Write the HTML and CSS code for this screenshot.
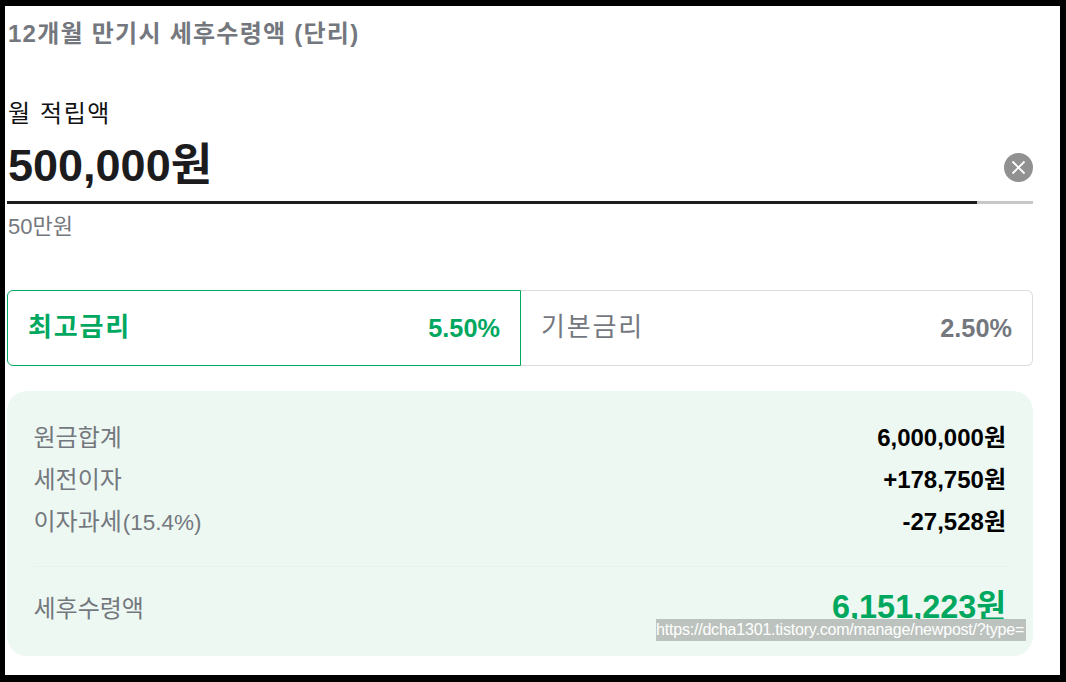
FILE: index.html
```html
<!DOCTYPE html>
<html lang="ko">
<head>
  <meta charset="UTF-8">
  <title>세후수령액</title>
  <link rel="stylesheet" href="styles.css">
</head>
<body>
  <div class="frame">
    <div class="calc">
      <h2 class="calc-title">12개월 만기시 세후수령액 (단리)</h2>

      <div class="amount-label">월 적립액</div>
      <div class="amount-row">
        <div class="amount-value">500,000원</div>
        <svg class="clear-btn" width="29" height="29" viewBox="0 0 29 29">
          <circle cx="14.5" cy="14.5" r="14.5" fill="#919191"/>
          <path d="M8.5 8.5 L20.5 20.5 M20.5 8.5 L8.5 20.5" stroke="#fff" stroke-width="1.8" fill="none"/>
        </svg>
      </div>
      <div class="amount-bar"><div class="amount-fill"></div></div>
      <div class="amount-hint">50만원</div>

      <div class="rate-tabs">
        <div class="rate-tab active">
          <span class="rate-name">최고금리</span>
          <span class="rate-value">5.50%</span>
        </div>
        <div class="rate-tab">
          <span class="rate-name">기본금리</span>
          <span class="rate-value">2.50%</span>
        </div>
      </div>

      <div class="summary">
        <div class="summary-row">
          <span class="summary-label">원금합계</span>
          <span class="summary-value">6,000,000원</span>
        </div>
        <div class="summary-row">
          <span class="summary-label">세전이자</span>
          <span class="summary-value">+178,750원</span>
        </div>
        <div class="summary-row">
          <span class="summary-label">이자과세<span class="summary-unit">(15.4%)</span></span>
          <span class="summary-value">-27,528원</span>
        </div>
        <div class="summary-total">
          <span class="summary-label">세후수령액</span>
          <span class="total-value">6,151,223원</span>
        </div>
      </div>
    </div>
    <div class="status-url">https://dcha1301.tistory.com/manage/newpost/?type=</div>
  </div>
</body>
</html>
```

FILE: styles.css
```css
* { box-sizing: border-box; font-family: "Liberation Sans", "Noto Sans CJK KR", sans-serif; }
html, body { margin: 0; padding: 0; background: #000; }

.frame {
  position: relative;
  width: 1055px;
  height: 669px;
  margin: 6px 0 0 5px;
  background: #fff;
  overflow: hidden;
}

.calc {
  width: 1026px;
  margin-left: 2px;
}

.calc-title {
  margin: 0;
  padding: 14px 0 0 1px;
  font-size: 24px;
  line-height: 28px;
  font-weight: bold;
  letter-spacing: 1.25px;
  color: #74787e;
}

.amount-label {
  margin-top: 51px;
  padding-left: 1px;
  font-size: 24px;
  line-height: 30px;
  letter-spacing: 1.6px;
  color: #111;
}

.amount-row {
  display: flex;
  align-items: center;
  justify-content: space-between;
  height: 50px;
  margin-top: 12px;
  padding-left: 1px;
}

.amount-value {
  font-size: 45px;
  line-height: 50px;
  font-weight: bold;
  color: #1c1c1e;
}

.clear-btn {
  margin-top: 2px;
}

.amount-bar {
  height: 3px;
  margin-top: 10px;
  background: #c8c8c8;
}

.amount-fill {
  width: 970px;
  height: 3px;
  background: #1c1c1e;
}

.amount-hint {
  margin-top: 10px;
  padding-left: 1px;
  font-size: 22px;
  line-height: 26px;
  color: #74787e;
}

.rate-tabs {
  display: flex;
  margin-top: 50px;
}

.rate-tab {
  flex: 1;
  display: flex;
  align-items: center;
  justify-content: space-between;
  height: 76px;
  padding: 0 20px;
  border: 1px solid #dcdcdc;
  border-left: none;
  border-radius: 0 6px 6px 0;
  color: #74787e;
}

.rate-tab.active {
  flex: 0 0 514px;
  border: 1px solid #00a85f;
  border-radius: 6px 0 0 6px;
  color: #00a85f;
}

.rate-name {
  font-size: 26px;
  letter-spacing: 1.8px;
  margin-top: -8px;
}

.rate-tab.active .rate-name {
  font-weight: bold;
}

.rate-value {
  font-size: 25.3px;
  font-weight: bold;
}

.summary {
  margin-top: 25px;
  height: 265px;
  padding: 23px 27px 0 26.5px;
  background: #eef8f3;
  border-radius: 20px;
}

.summary-row {
  display: flex;
  align-items: center;
  justify-content: space-between;
  height: 42px;
}

.summary-label {
  font-size: 24px;
  color: #74787e;
}

.summary-unit {
  margin-left: 1px;
  font-size: 22.5px;
}

.summary-value {
  font-size: 24px;
  font-weight: bold;
  color: #000;
}

.summary-total {
  display: flex;
  justify-content: space-between;
  margin: 26px -2px 0 -1px;
  padding: 23px 2px 0 1px;
  border-top: 1px solid #e8f3ee;
}

.summary-total .summary-label {
  line-height: 38px;
}

.total-value {
  font-size: 32.4px;
  line-height: 34px;
  font-weight: bold;
  color: #00a85f;
}

.status-url {
  position: absolute;
  left: 651px;
  top: 613px;
  width: 370px;
  height: 22px;
  background: #bcc3be;
  color: #fff;
  font-size: 16px;
  line-height: 22px;
  letter-spacing: -0.2px;
  white-space: nowrap;
}
```
